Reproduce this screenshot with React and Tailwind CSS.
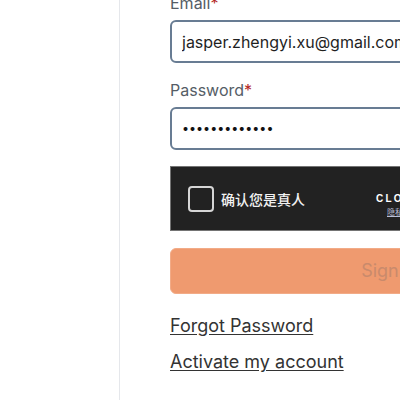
export default function App() {
    return (
        <div className="flex w-[400px] h-[400px] overflow-hidden bg-white font-['Inter','Noto_Sans_CJK_SC',sans-serif]">
            {/* left rail */}
            <div className="w-[120px] shrink-0 h-full border-r border-[#e5e7eb]" />

            <form className="shrink-0 w-[540px] pl-[50px] -mt-[9px] flex flex-col">
                <label className="text-base leading-6 text-[#555d66]">
                    Email<span className="text-[#b3261e]">*</span>
                </label>
                <input
                    readOnly
                    value="jasper.zhengyi.xu@gmail.com"
                    className="mt-[5px] h-[43px] w-[440px] rounded-md border-2 border-[#687c93] px-[10px] text-base text-[#1f1f1f] outline-none"
                />

                <label className="mt-[15px] text-base leading-6 text-[#555d66]">
                    Password<span className="text-[#b3261e]">*</span>
                </label>
                <input
                    readOnly
                    type="password"
                    value="abcdefghijklm"
                    className="mt-[5px] h-[43px] w-[440px] rounded-md border-2 border-[#687c93] px-[10px] text-[12.5px] text-[#111] outline-none"
                />

                {/* captcha widget */}
                <div className="mt-4 w-[300px] h-[65px] shrink-0 flex items-center bg-[#222222] border border-[#747474] px-[17px] whitespace-nowrap">
                    <div className="w-[26px] h-[26px] shrink-0 rounded-[4px] border-2 border-[#d6d6d6]" />
                    <span className="ml-[7px] shrink-0 text-sm font-medium text-[#f2f2f2] font-['Noto_Sans_CJK_SC',sans-serif]">确认您是真人</span>
                    <div className="ml-[71px] mt-[14px] shrink-0 flex flex-col items-start">
                        <span className="text-[10px] leading-3 font-bold tracking-[0.22em] text-white font-['Liberation_Sans',sans-serif]">CLOUDFLARE</span>
                        <span className="mt-[1px] ml-[11px] text-[8px] leading-3 text-[#b8bfd6] underline">隐私 · 条款</span>
                    </div>
                </div>

                <button
                    type="button"
                    className="mt-[17px] h-[46px] w-[440px] rounded-md bg-[#ef9a6f] border border-[#f2ab87] text-lg text-[#c98a6c]"
                >
                    Sign in
                </button>

                <a href="#" className="mt-[18px] self-start text-lg leading-7 text-[#333] underline underline-offset-2">
                    Forgot Password
                </a>
                <a href="#" className="mt-2 self-start text-lg leading-7 text-[#333] underline underline-offset-2">
                    Activate my account
                </a>
            </form>
        </div>
    );
}
